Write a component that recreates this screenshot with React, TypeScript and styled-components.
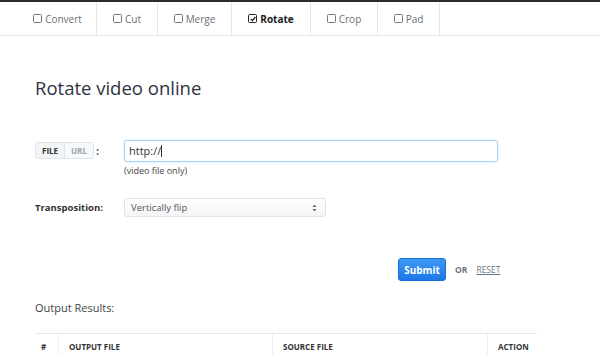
import React, {useState} from 'react'
import styled, {createGlobalStyle} from 'styled-components'

const GlobalStyle = createGlobalStyle`
  html, body {
    margin: 0;
    padding: 0;
    background: #fff;
  }
  body {
    font-family: "Open Sans", "Liberation Sans", sans-serif;
    color: #333;
  }
`

const Page = styled.div`
  width: 600px;
  height: 363px;
  overflow: hidden;
  border-top: 2px solid #2b2b2b;
  box-sizing: border-box;
`

const Nav = styled.div`
  display: flex;
  height: 33px;
  padding-left: 19px;
  border-bottom: 1px solid #e4e7ec;
`

const Tab = styled.div<{$width: number; $active?: boolean}>`
  flex: none;
  width: ${p => p.$width}px;
  display: flex;
  align-items: center;
  justify-content: center;
  gap: 3px;
  border-right: 1px solid #e4e7ec;
  box-sizing: border-box;
  font-size: 10px;
  color: ${p => (p.$active ? '#222' : '#6b6f76')};
  font-weight: ${p => (p.$active ? 700 : 400)};
`

const Box = styled.span<{$checked?: boolean}>`
  width: 7px;
  height: 7px;
  border: 1px solid ${p => (p.$checked ? '#222' : '#777')};
  border-radius: 1.5px;
  display: inline-flex;
  align-items: center;
  justify-content: center;
  svg {
    display: block;
  }
`

const Content = styled.div`
  padding: 38px 0 0 35px;
`

const Title = styled.h1`
  margin: 0 0 38px;
  font-size: 18.5px;
  font-weight: 400;
  color: #2d3440;
  line-height: 28px;
`

const Row = styled.div<{$gap?: number}>`
  display: flex;
  align-items: flex-start;
  margin-top: ${p => p.$gap || 0}px;
`

const LabelCell = styled.div`
  width: 89px;
  flex: none;
  display: flex;
  align-items: center;
`

const Toggle = styled.div`
  display: flex;
  height: 15px;
  border: 1px solid #dfe3e8;
  border-radius: 3px;
  overflow: hidden;
  margin-top: 2px;
`

const ToggleItem = styled.div<{$on?: boolean}>`
  padding: 0 6px;
  font-size: 8px;
  font-weight: 700;
  line-height: 15px;
  color: ${p => (p.$on ? '#333' : '#9aa3ae')};
  background: ${p => (p.$on ? '#f3f4f6' : '#f8f9fb')};
  & + & {
    border-left: 1px solid #dfe3e8;
  }
`

const Colon = styled.span`
  margin-left: 2px;
  font-size: 11px;
  font-weight: 700;
  color: #555;
  margin-top: 1px;
`

const Field = styled.div`
  display: flex;
  flex-direction: column;
`

const UrlInput = styled.div`
  width: 374px;
  height: 22px;
  box-sizing: border-box;
  border: 1.5px solid #a8d3f7;
  border-radius: 3px;
  box-shadow: 0 0 2px rgba(110, 180, 240, 0.4);
  padding: 0 4px;
  font-size: 11px;
  line-height: 19px;
  color: #333;
`

const Caret = styled.span`
  display: inline-block;
  width: 1px;
  height: 12px;
  background: #333;
  vertical-align: -2px;
`

const Hint = styled.div`
  font-size: 9px;
  color: #444;
  margin-top: 2px;
`

const FieldLabel = styled.div`
  width: 89px;
  flex: none;
  font-size: 9.5px;
  font-weight: 700;
  color: #333;
  line-height: 19px;
`

const Select = styled.div`
  width: 202px;
  height: 19px;
  box-sizing: border-box;
  border: 1px solid #dfe3e8;
  border-radius: 3px;
  background: linear-gradient(#fff, #f3f4f6);
  display: flex;
  align-items: center;
  justify-content: space-between;
  padding: 0 8px 0 6px;
  font-size: 9.5px;
  color: #555;
`

const Actions = styled.div`
  display: flex;
  align-items: center;
  margin: 41px 0 0 363px;
  gap: 9px;
`

const SubmitButton = styled.button`
  width: 48px;
  height: 23px;
  border: 1px solid #1a6ed8;
  border-radius: 3px;
  background: linear-gradient(#3d98f5, #1c78e6);
  color: #fff;
  font-family: inherit;
  font-weight: 700;
  font-size: 10px;
  padding: 0;
`

const Or = styled.span`
  font-size: 8.5px;
  font-weight: 700;
  color: #6a7686;
`

const ResetLink = styled.a`
  font-size: 8.5px;
  color: #6a7686;
  text-decoration: underline;
`

const Section = styled.div`
  margin-top: 19px;
  font-size: 11px;
  color: #444;
`

const Table = styled.div`
  margin-top: 18px;
  width: 502px;
  border-top: 1px solid #e4e7ec;
  display: grid;
  grid-template-columns: 23px 214px 215px 50px;
  height: 28px;
`

const Th = styled.div<{$line?: boolean}>`
  font-size: 8px;
  font-weight: 700;
  color: #333;
  padding: 7px 0 0 ${p => (p.$line ? 10 : 6)}px;
  border-left: ${p => (p.$line ? '1px solid #eceef2' : 'none')};
  height: 14px;
`

const Check = () => (
  <svg width="6" height="6" viewBox="0 0 6 6">
    <path d="M0.8 3 L2.5 4.6 L5.3 1" stroke="#222" strokeWidth="1.3" fill="none"/>
  </svg>
)

const tabs = [
  {label: 'Convert', width: 78},
  {label: 'Cut', width: 61},
  {label: 'Merge', width: 74},
  {label: 'Rotate', width: 79, active: true},
  {label: 'Crop', width: 67},
  {label: 'Pad', width: 62},
]

export default function App() {
  const [mode] = useState('file')
  return (
    <Page>
      <GlobalStyle/>
      <Nav>
        {tabs.map(t => (
          <Tab key={t.label} $width={t.width} $active={t.active}>
            <Box $checked={t.active}>{t.active && <Check/>}</Box>
            {t.label}
          </Tab>
        ))}
      </Nav>
      <Content>
        <Title>Rotate video online</Title>
        <Row>
          <LabelCell>
            <Toggle>
              <ToggleItem $on={mode === 'file'}>FILE</ToggleItem>
              <ToggleItem $on={mode === 'url'}>URL</ToggleItem>
            </Toggle>
            <Colon>:</Colon>
          </LabelCell>
          <Field>
            <UrlInput>http://<Caret/></UrlInput>
            <Hint>(video file only)</Hint>
          </Field>
        </Row>
        <Row $gap={21}>
          <FieldLabel>Transposition:</FieldLabel>
          <Select>
            <span>Vertically flip</span>
            <svg width="5" height="8" viewBox="0 0 5 8">
              <path d="M2.5 0.5 L4.5 3 L0.5 3 Z M2.5 7.5 L4.5 5 L0.5 5 Z" fill="#666"/>
            </svg>
          </Select>
        </Row>
        <Actions>
          <SubmitButton>Submit</SubmitButton>
          <Or>OR</Or>
          <ResetLink>RESET</ResetLink>
        </Actions>
        <Section>Output Results:</Section>
        <Table>
          <Th>#</Th>
          <Th $line>OUTPUT FILE</Th>
          <Th $line>SOURCE FILE</Th>
          <Th $line>ACTION</Th>
        </Table>
      </Content>
    </Page>
  )
}
